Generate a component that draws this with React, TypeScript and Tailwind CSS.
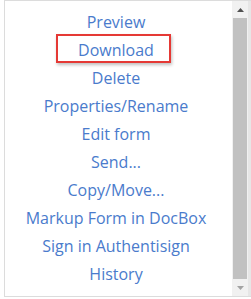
import React from "react";

const items = [
  "Preview",
  "Download",
  "Delete",
  "Properties/Rename",
  "Edit form",
  "Send...",
  "Copy/Move...",
  "Markup Form in DocBox",
  "Sign in Authentisign",
  "History",
];

export default function App() {
  return (
    <div className="w-[251px] h-[299px] bg-white flex overflow-hidden" style={{ fontFamily: '"Open Sans", sans-serif' }}>
      <div className="w-[4px] shrink-0" />
      <div className="flex-1 h-[297px] border-l border-t border-b border-[#dcdcdc] flex">
        <div className="flex-1 flex flex-col items-center pt-[7px] pr-[5px]">
          {items.map((t) =>
            t === "Download" ? (
              <div
                key={t}
                className="h-[29px] -mt-[2px] mb-[1px] w-[115px] -ml-[6px] border-2 border-[#e53935] shadow-[1px_2px_3px_rgba(0,0,0,0.25)] flex items-center justify-center text-[16px] text-[#4a7bcc] pl-[6px] pt-[2px]"
              >
                {t}
              </div>
            ) : (
              <div key={t} className="h-[28px] leading-[28px] text-[16px] text-[#4a7bcc]">
                {t}
              </div>
            )
          )}
        </div>
        <div className="w-[16px] shrink-0 bg-[#f1f1f1] flex flex-col">
          <div className="h-[17px] flex items-center justify-center">
            <svg width="7" height="4" viewBox="0 0 7 4"><polygon points="0,4 7,4 3.5,0" fill="#505050" /></svg>
          </div>
          <div className="flex-1 mx-[1px] bg-[#c1c1c1]" />
          <div className="h-[17px] flex items-center justify-center">
            <svg width="7" height="4" viewBox="0 0 7 4"><polygon points="0,0 7,0 3.5,4" fill="#a3a3a3" /></svg>
          </div>
        </div>
        <div className="w-[3px] shrink-0 bg-[#e6e6e6]" />
      </div>
    </div>
  );
}
